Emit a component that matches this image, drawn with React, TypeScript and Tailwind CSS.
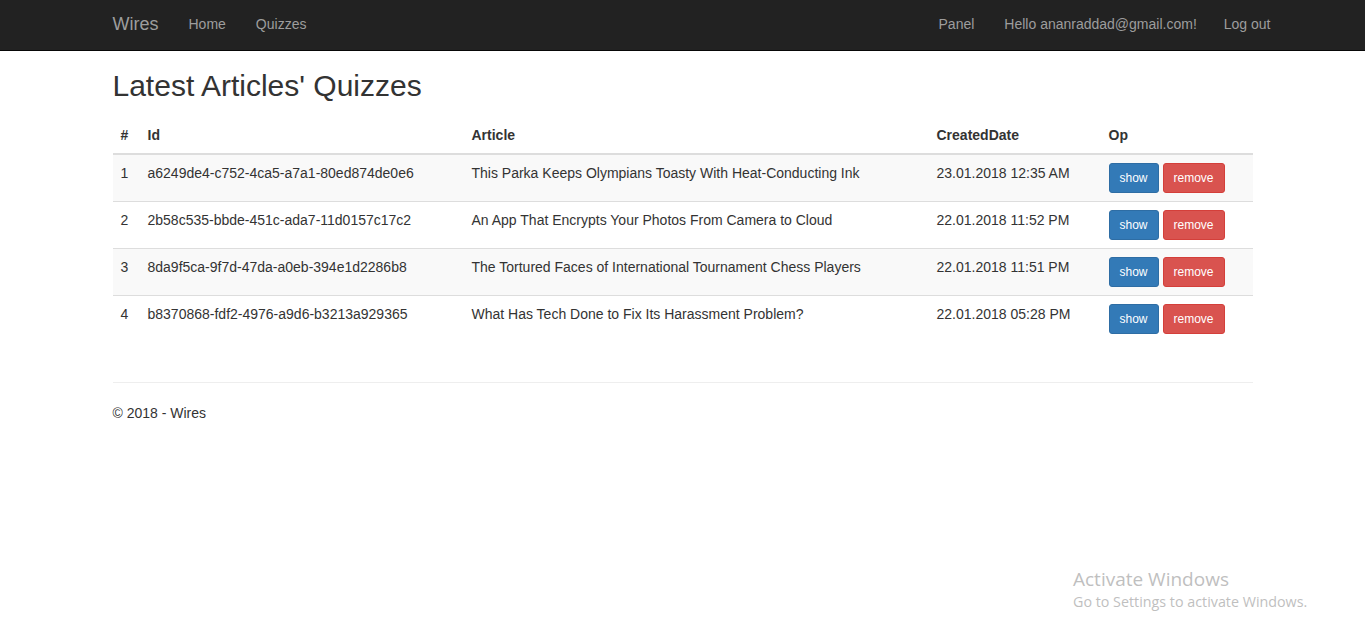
import React from "react";

const rows = [
  ["1", "a6249de4-c752-4ca5-a7a1-80ed874de0e6", "This Parka Keeps Olympians Toasty With Heat-Conducting Ink", "23.01.2018 12:35 AM"],
  ["2", "2b58c535-bbde-451c-ada7-11d0157c17c2", "An App That Encrypts Your Photos From Camera to Cloud", "22.01.2018 11:52 PM"],
  ["3", "8da9f5ca-9f7d-47da-a0eb-394e1d2286b8", "The Tortured Faces of International Tournament Chess Players", "22.01.2018 11:51 PM"],
  ["4", "b8370868-fdf2-4976-a9d6-b3213a929365", "What Has Tech Done to Fix Its Harassment Problem?", "22.01.2018 05:28 PM"],
];

export default function App() {
  return (
    <div className="relative min-h-[640px] bg-white text-[14px] leading-[20px] text-[#333]" style={{ fontFamily: '"Liberation Sans", Arial, sans-serif' }}>
      <nav className="h-[51px] bg-[#222] border-b border-[#080808]">
        <div className="mx-auto w-[1140px] flex justify-between">
          <div className="flex">
            <a className="-ml-[15px] px-[15px] pt-[14px] pb-[16px] text-[18px] leading-[20px] text-[#9d9d9d] h-[50px]">Wires</a>
            <a className="px-[15px] pt-[14px] pb-[16px] text-[#9d9d9d]">Home</a>
            <a className="px-[15px] pt-[14px] pb-[16px] text-[#9d9d9d]">Quizzes</a>
          </div>
          <div className="flex -mr-[30px]">
            <a className="px-[15px] pt-[14px] pb-[16px] text-[#9d9d9d]">Panel</a>
            <a className="px-[15px] pt-[14px] pb-[16px] text-[#9d9d9d]">Hello ananraddad@gmail.com!</a>
            <a className="pl-[12px] pr-[12px] pt-[14px] pb-[16px] text-[#9d9d9d]">Log out</a>
          </div>
        </div>
      </nav>
      <div className="mx-auto w-[1140px]">
        <h2 className="mt-[18px] mb-[10px] text-[30px] leading-[33px] font-normal text-[#333]">Latest Articles' Quizzes</h2>
        <table className="w-[1140px] mt-[15px] mb-0 border-collapse table-fixed">
          <colgroup>
            <col className="w-[27px]" />
            <col className="w-[324px]" />
            <col className="w-[465px]" />
            <col className="w-[172px]" />
            <col className="w-[152px]" />
          </colgroup>
          <thead>
            <tr className="border-b-2 border-[#ddd]">
              {["#", "Id", "Article", "CreatedDate", "Op"].map((h) => (
                <th key={h} className="p-[8px] text-left font-bold align-bottom">{h}</th>
              ))}
            </tr>
          </thead>
          <tbody>
            {rows.map((r, i) => (
              <tr key={r[0]} className={i % 2 === 0 ? "bg-[#f9f9f9]" : "bg-white"}>
                {r.map((c, j) => (
                  <td key={j} className={"p-[8px] align-top whitespace-nowrap " + (i > 0 ? "border-t border-[#ddd]" : "")}>{c}</td>
                ))}
                <td className={"p-[8px] align-top whitespace-nowrap " + (i > 0 ? "border-t border-[#ddd]" : "")}>
                  <div className="flex gap-[4px]">
                    <button className="h-[30px] px-[10px] text-[12px] leading-[18px] rounded-[3px] border border-[#2e6da4] bg-[#337ab7] text-white">show</button>
                    <button className="h-[30px] px-[10px] text-[12px] leading-[18px] rounded-[3px] border border-[#d43f3a] bg-[#d9534f] text-white">remove</button>
                  </div>
                </td>
              </tr>
            ))}
          </tbody>
        </table>
        <hr className="mt-[40px] mb-[20px] border-0 border-t border-[#eee]" />
        <footer>
          <p>© 2018 - Wires</p>
        </footer>
      </div>
      <div className="absolute left-[1073px] top-[566px] text-[#bfbfbf]" style={{ fontFamily: '"Open Sans", "Noto Sans", sans-serif' }}>
        <div className="text-[19px] leading-[26px]">Activate Windows</div>
        <div className="text-[14.3px] leading-[20px]">Go to Settings to activate Windows.</div>
      </div>
    </div>
  );
}
